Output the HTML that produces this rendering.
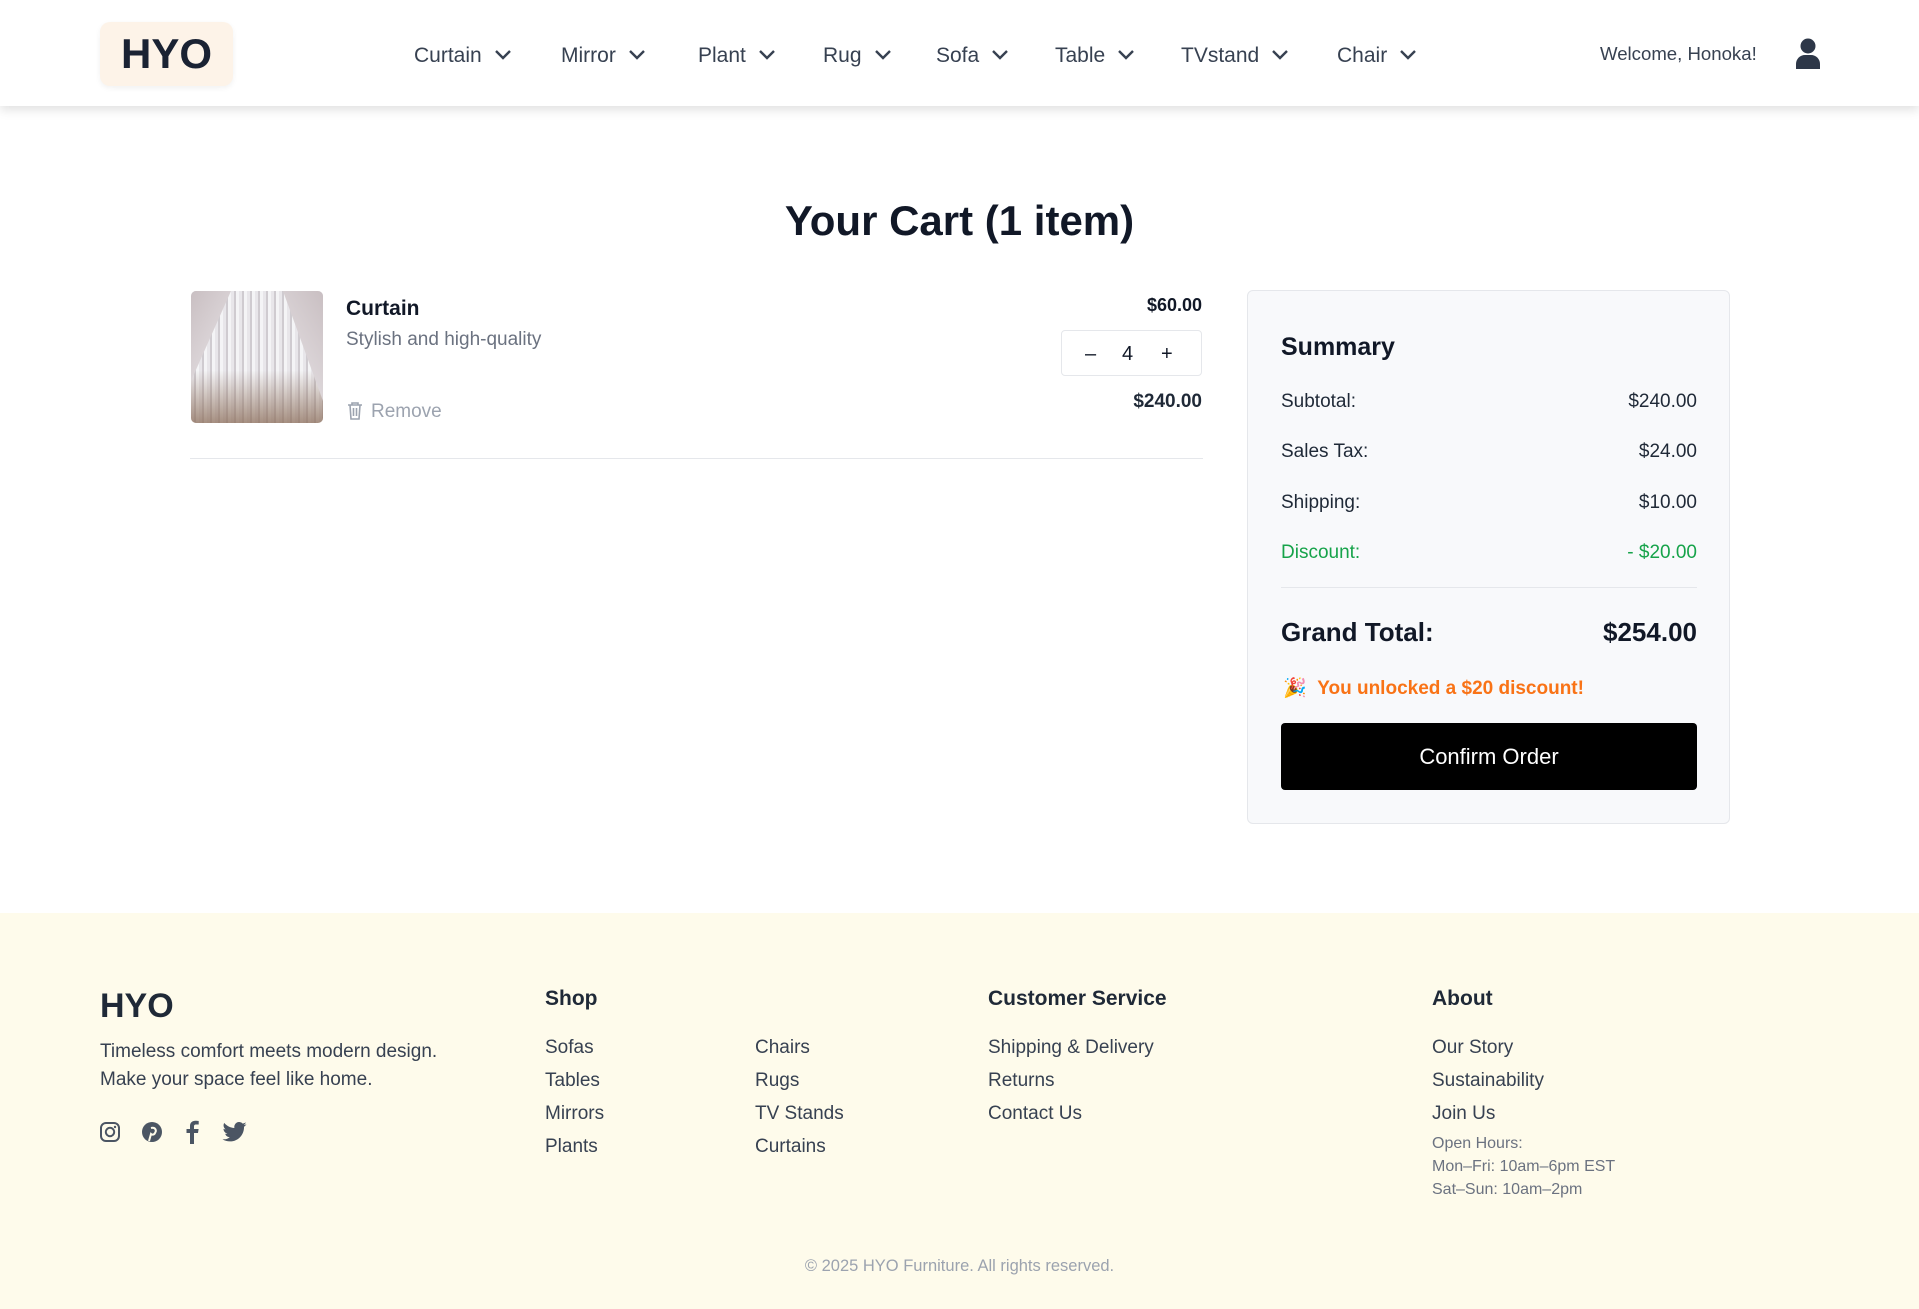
<!DOCTYPE html>
<html><head><meta charset="utf-8"><style>
*{margin:0;padding:0;box-sizing:border-box}
body{width:1919px;height:1309px;position:relative;background:#fff;font-family:"Liberation Sans",sans-serif;color:#1f2937;overflow:hidden}
.a{position:absolute;white-space:nowrap}
header{position:absolute;left:0;top:0;width:1919px;height:106px;background:#fff;box-shadow:0 4px 10px rgba(0,0,0,.12);z-index:2}
.logo{position:absolute;left:100px;top:22px;width:133px;height:64px;background:#fdf3e8;border-radius:10px;box-shadow:0 2px 6px rgba(0,0,0,.06);font-weight:bold;font-size:42px;color:#1a2233;text-align:center;line-height:64px}
.nav{font-size:21px;color:#374151;top:44px}
.nav svg{vertical-align:middle;margin-left:12px;margin-top:-3px}
.b{font-weight:bold}
.row{position:absolute;left:1281px;width:416px;font-size:19px;color:#1f2937;display:flex;justify-content:space-between}
.fh{font-size:21px;font-weight:bold;color:#1f2937}
.fl{font-size:19px;color:#374151}
</style></head><body>
<header>
<div class="logo">HYO</div>
<div class="a nav" style="left:414px">Curtain<svg width="18" height="12" viewBox="0 0 18 12"><path d="M2 2l7 7 7-7" fill="none" stroke="#374151" stroke-width="2.4"/></svg></div>
<div class="a nav" style="left:561px">Mirror<svg width="18" height="12" viewBox="0 0 18 12"><path d="M2 2l7 7 7-7" fill="none" stroke="#374151" stroke-width="2.4"/></svg></div>
<div class="a nav" style="left:698px">Plant<svg width="18" height="12" viewBox="0 0 18 12"><path d="M2 2l7 7 7-7" fill="none" stroke="#374151" stroke-width="2.4"/></svg></div>
<div class="a nav" style="left:823px">Rug<svg width="18" height="12" viewBox="0 0 18 12"><path d="M2 2l7 7 7-7" fill="none" stroke="#374151" stroke-width="2.4"/></svg></div>
<div class="a nav" style="left:936px">Sofa<svg width="18" height="12" viewBox="0 0 18 12"><path d="M2 2l7 7 7-7" fill="none" stroke="#374151" stroke-width="2.4"/></svg></div>
<div class="a nav" style="left:1055px">Table<svg width="18" height="12" viewBox="0 0 18 12"><path d="M2 2l7 7 7-7" fill="none" stroke="#374151" stroke-width="2.4"/></svg></div>
<div class="a nav" style="left:1181px">TVstand<svg width="18" height="12" viewBox="0 0 18 12"><path d="M2 2l7 7 7-7" fill="none" stroke="#374151" stroke-width="2.4"/></svg></div>
<div class="a nav" style="left:1337px">Chair<svg width="18" height="12" viewBox="0 0 18 12"><path d="M2 2l7 7 7-7" fill="none" stroke="#374151" stroke-width="2.4"/></svg></div>
<div class="a" style="left:1600px;top:43px;font-size:18.6px;color:#374151">Welcome, Honoka!</div>
<svg class="a" style="left:1795px;top:38px" width="26" height="31" viewBox="0 0 26 31"><circle cx="13" cy="8" r="7.5" fill="#2d3748"/><path d="M1 31v-5c0-5 4-9 9-9h6c5 0 9 4 9 9v5z" fill="#2d3748"/></svg>
</header>

<div class="a b" style="left:0;width:1919px;text-align:center;top:197px;font-size:42px;color:#111827">Your Cart (1 item)</div>

<div class="a" style="left:191px;top:291px;width:132px;height:132px;border-radius:5px;overflow:hidden;background:linear-gradient(180deg,rgba(255,255,255,0) 60%,rgba(140,110,90,.75) 100%),repeating-linear-gradient(90deg,#e8e6ea 0 3px,#cfcbd0 3px 5px,#f4f4f6 5px 8px),#ddd"><div style="position:absolute;left:0;top:0;width:40px;height:90px;background:linear-gradient(120deg,#c9bfc2,#e9e5e8);clip-path:polygon(0 0,100% 0,0 100%)"></div><div style="position:absolute;right:0;top:0;width:40px;height:110px;background:linear-gradient(240deg,#c9bfc2,#e9e5e8);clip-path:polygon(0 0,100% 0,100% 100%)"></div></div>
<div class="a b" style="left:346px;top:297px;font-size:21px;color:#111827">Curtain</div>
<div class="a" style="left:346px;top:329px;font-size:19px;color:#6b7280">Stylish and high-quality</div>
<svg class="a" style="left:347px;top:401px" width="16" height="19" viewBox="0 0 16 19"><path d="M1 4h14M5 4V2h6v2M3 4l1 14h8l1-14M6.5 7v8M9.5 7v8" fill="none" stroke="#9ca3af" stroke-width="1.6"/></svg>
<div class="a" style="left:371px;top:401px;font-size:19px;color:#9ca3af">Remove</div>
<div class="a b" style="right:717px;top:295px;font-size:18px;color:#111827">$60.00</div>
<div class="a" style="left:1061px;top:330px;width:141px;height:46px;border:1px solid #e5e7eb;border-radius:4px;font-size:20px;color:#111827"><span class="a" style="left:23px;top:12px">–</span><span class="a" style="left:60px;top:12px">4</span><span class="a" style="left:99px;top:12px">+</span></div>
<div class="a b" style="right:717px;top:391px;font-size:19px;color:#1f2937">$240.00</div>
<div class="a" style="left:190px;top:458px;width:1013px;height:1px;background:#e5e7eb"></div>

<div class="a" style="left:1247px;top:290px;width:483px;height:534px;background:#f8f9fb;border:1px solid #e5e7eb;border-radius:6px"></div>
<div class="a b" style="left:1281px;top:333px;font-size:25px;color:#111827">Summary</div>
<div class="row" style="top:391px"><span>Subtotal:</span><span>$240.00</span></div>
<div class="row" style="top:441px"><span>Sales Tax:</span><span>$24.00</span></div>
<div class="row" style="top:492px"><span>Shipping:</span><span>$10.00</span></div>
<div class="row" style="top:542px;color:#16a34a"><span>Discount:</span><span>- $20.00</span></div>
<div class="a" style="left:1281px;top:587px;width:416px;height:1px;background:#e5e7eb"></div>
<div class="row b" style="top:617px;font-size:26px;color:#111827"><span>Grand Total:</span><span>$254.00</span></div>
<div class="a b" style="left:1283px;top:676px;font-size:19px;color:#f97316">🎉 &nbsp;You unlocked a $20 discount!</div>
<div class="a" style="left:1281px;top:723px;width:416px;height:67px;background:#000;border-radius:4px;color:#fff;font-size:22px;text-align:center;line-height:67px">Confirm Order</div>

<div class="a" style="left:0;top:913px;width:1919px;height:396px;background:#fefbeb"></div>
<div class="a b" style="left:100px;top:987px;font-size:34px;color:#1f2937">HYO</div>
<div class="a fl" style="left:100px;top:1038px;line-height:28px">Timeless comfort meets modern design.<br>Make your space feel like home.</div>
<svg class="a" style="left:99px;top:1121px" width="22" height="22" viewBox="0 0 22 22"><rect x="2" y="2" width="18" height="18" rx="5" fill="none" stroke="#4b5563" stroke-width="2"/><circle cx="11" cy="11" r="4.2" fill="none" stroke="#4b5563" stroke-width="2"/><circle cx="16" cy="6" r="1.2" fill="#4b5563"/></svg>
<svg class="a" style="left:141px;top:1121px" width="22" height="22" viewBox="0 0 22 22"><circle cx="11" cy="11" r="10" fill="#4b5563"/><path d="M10 7c4-1 6 2 4 5-1 2-3 2-4 1l-2 7" fill="none" stroke="#fefbeb" stroke-width="2"/></svg>
<svg class="a" style="left:185px;top:1120px" width="14" height="24" viewBox="0 0 14 24"><path d="M9 24V13h4l.6-4H9V6.5C9 5.3 9.4 4.5 11 4.5h2.7V1C13 .9 11.8.8 10.4.8 7.4.8 5 2.6 5 6v3H1.5v4H5v11z" fill="#4b5563"/></svg>
<svg class="a" style="left:222px;top:1122px" width="25" height="20" viewBox="0 0 24 20"><path d="M24 2.3c-.9.4-1.8.7-2.8.8 1-.6 1.8-1.6 2.2-2.7-1 .6-2 1-3.1 1.2A4.9 4.9 0 0 0 11.9 6C7.8 5.8 4.2 3.9 1.7.9c-1.3 2.3-.6 5 1.5 6.5-.8 0-1.6-.2-2.2-.6 0 2.4 1.7 4.4 3.9 4.9-.7.2-1.5.2-2.2.1.6 2 2.4 3.4 4.6 3.4A9.9 9.9 0 0 1 0 17.2 14 14 0 0 0 7.5 19.4c9.1 0 14.3-7.7 14-14.6 1-.7 1.8-1.6 2.5-2.5z" fill="#4b5563"/></svg>

<div class="a fh" style="left:545px;top:987px">Shop</div>
<div class="a fl" style="left:545px;top:1031px;line-height:33px">Sofas<br>Tables<br>Mirrors<br>Plants</div>
<div class="a fl" style="left:755px;top:1031px;line-height:33px">Chairs<br>Rugs<br>TV Stands<br>Curtains</div>
<div class="a fh" style="left:988px;top:987px">Customer Service</div>
<div class="a fl" style="left:988px;top:1031px;line-height:33px">Shipping &amp; Delivery<br>Returns<br>Contact Us</div>
<div class="a fh" style="left:1432px;top:987px">About</div>
<div class="a fl" style="left:1432px;top:1031px;line-height:33px">Our Story<br>Sustainability<br>Join Us</div>
<div class="a" style="left:1432px;top:1132px;font-size:16px;line-height:23px;color:#6b7280">Open Hours:<br>Mon–Fri: 10am–6pm EST<br>Sat–Sun: 10am–2pm</div>
<div class="a" style="left:0;width:1919px;text-align:center;top:1257px;font-size:16.5px;color:#9ca3af">© 2025 HYO Furniture. All rights reserved.</div>
</body></html>
